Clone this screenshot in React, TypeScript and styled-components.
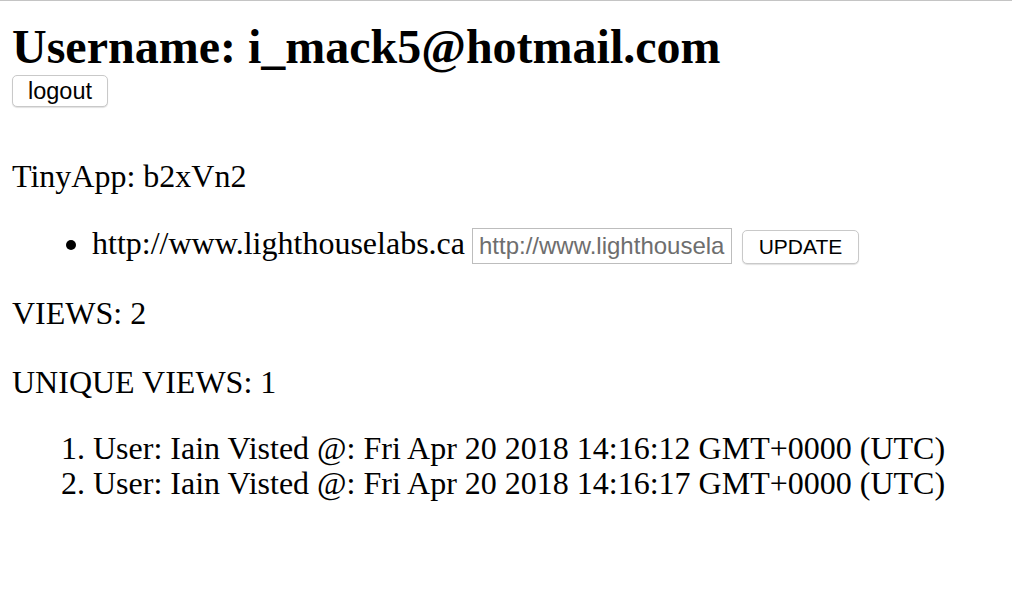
import React from "react";
import styled, { createGlobalStyle } from "styled-components";

const Global = createGlobalStyle`
  html, body {
    margin: 0;
    padding: 0;
    background: #ffffff;
  }
  body {
    font-family: "Liberation Serif", "Times New Roman", serif;
    color: #000;
  }
`;

const Page = styled.div`
  border-top: 1px solid #c4c4c4;
  padding: 0 12px;
  min-height: 591px;
  box-sizing: border-box;
`;

const Title = styled.h1`
  margin: 18px 0 0;
  font-size: 48px;
  line-height: 56px;
  font-weight: bold;
  white-space: nowrap;
`;

const Button = styled.button<{ $w: number }>`
  box-sizing: border-box;
  width: ${(p) => p.$w}px;
  height: 32px;
  padding: 0;
  background: #ffffff;
  border: 1px solid #c9c9c9;
  border-radius: 5px;
  box-shadow: 0 1px 1px rgba(0, 0, 0, 0.12);
  font-family: "Liberation Sans", Arial, sans-serif;
  font-size: 23.5px;
  color: #000;
  display: inline-flex;
  align-items: center;
  justify-content: center;
`;

const Heading = styled.p<{ $top: number }>`
  margin: ${(p) => p.$top}px 0 0;
  font-size: 32px;
  line-height: 36px;
`;

const LinkList = styled.ul`
  margin: 31px 0 0;
  padding-left: 80px;
  font-size: 32px;
  line-height: 36px;
`;

const LinkItem = styled.li`
  white-space: nowrap;
`;

const UrlInput = styled.input`
  box-sizing: border-box;
  width: 260px;
  height: 36px;
  margin: 0 0 0 7px;
  padding: 0 6px;
  border: 1px solid #bdbdbd;
  border-radius: 0;
  font-family: "Liberation Sans", Arial, sans-serif;
  font-size: 24px;
  color: #6e6e6e;
  vertical-align: baseline;
  outline: none;
`;

const UpdateButton = styled(Button)`
  height: 34px;
  margin-left: 10px;
  font-size: 21px;
  vertical-align: baseline;
`;

const VisitList = styled.ol`
  margin: 31px 0 0;
  padding-left: 81px;
  font-size: 32px;
  line-height: 35px;
`;

const visits = [
  "Fri Apr 20 2018 14:16:12 GMT+0000 (UTC)",
  "Fri Apr 20 2018 14:16:17 GMT+0000 (UTC)",
];

export default function App() {
  return (
    <>
      <Global />
      <Page>
        <Title>Username: i_mack5@hotmail.com</Title>
        <Button $w={96}>logout</Button>
        <Heading $top={51}>TinyApp: b2xVn2</Heading>
        <LinkList>
          <LinkItem>
            http://www.lighthouselabs.ca
            <UrlInput defaultValue="http://www.lighthouselabs.ca" />
            <UpdateButton $w={117}>UPDATE</UpdateButton>
          </LinkItem>
        </LinkList>
        <Heading $top={31}>VIEWS: 2</Heading>
        <Heading $top={33}>UNIQUE VIEWS: 1</Heading>
        <VisitList>
          {visits.map((v, i) => (
            <li key={i}>User: Iain Visted @: {v}</li>
          ))}
        </VisitList>
      </Page>
    </>
  );
}
